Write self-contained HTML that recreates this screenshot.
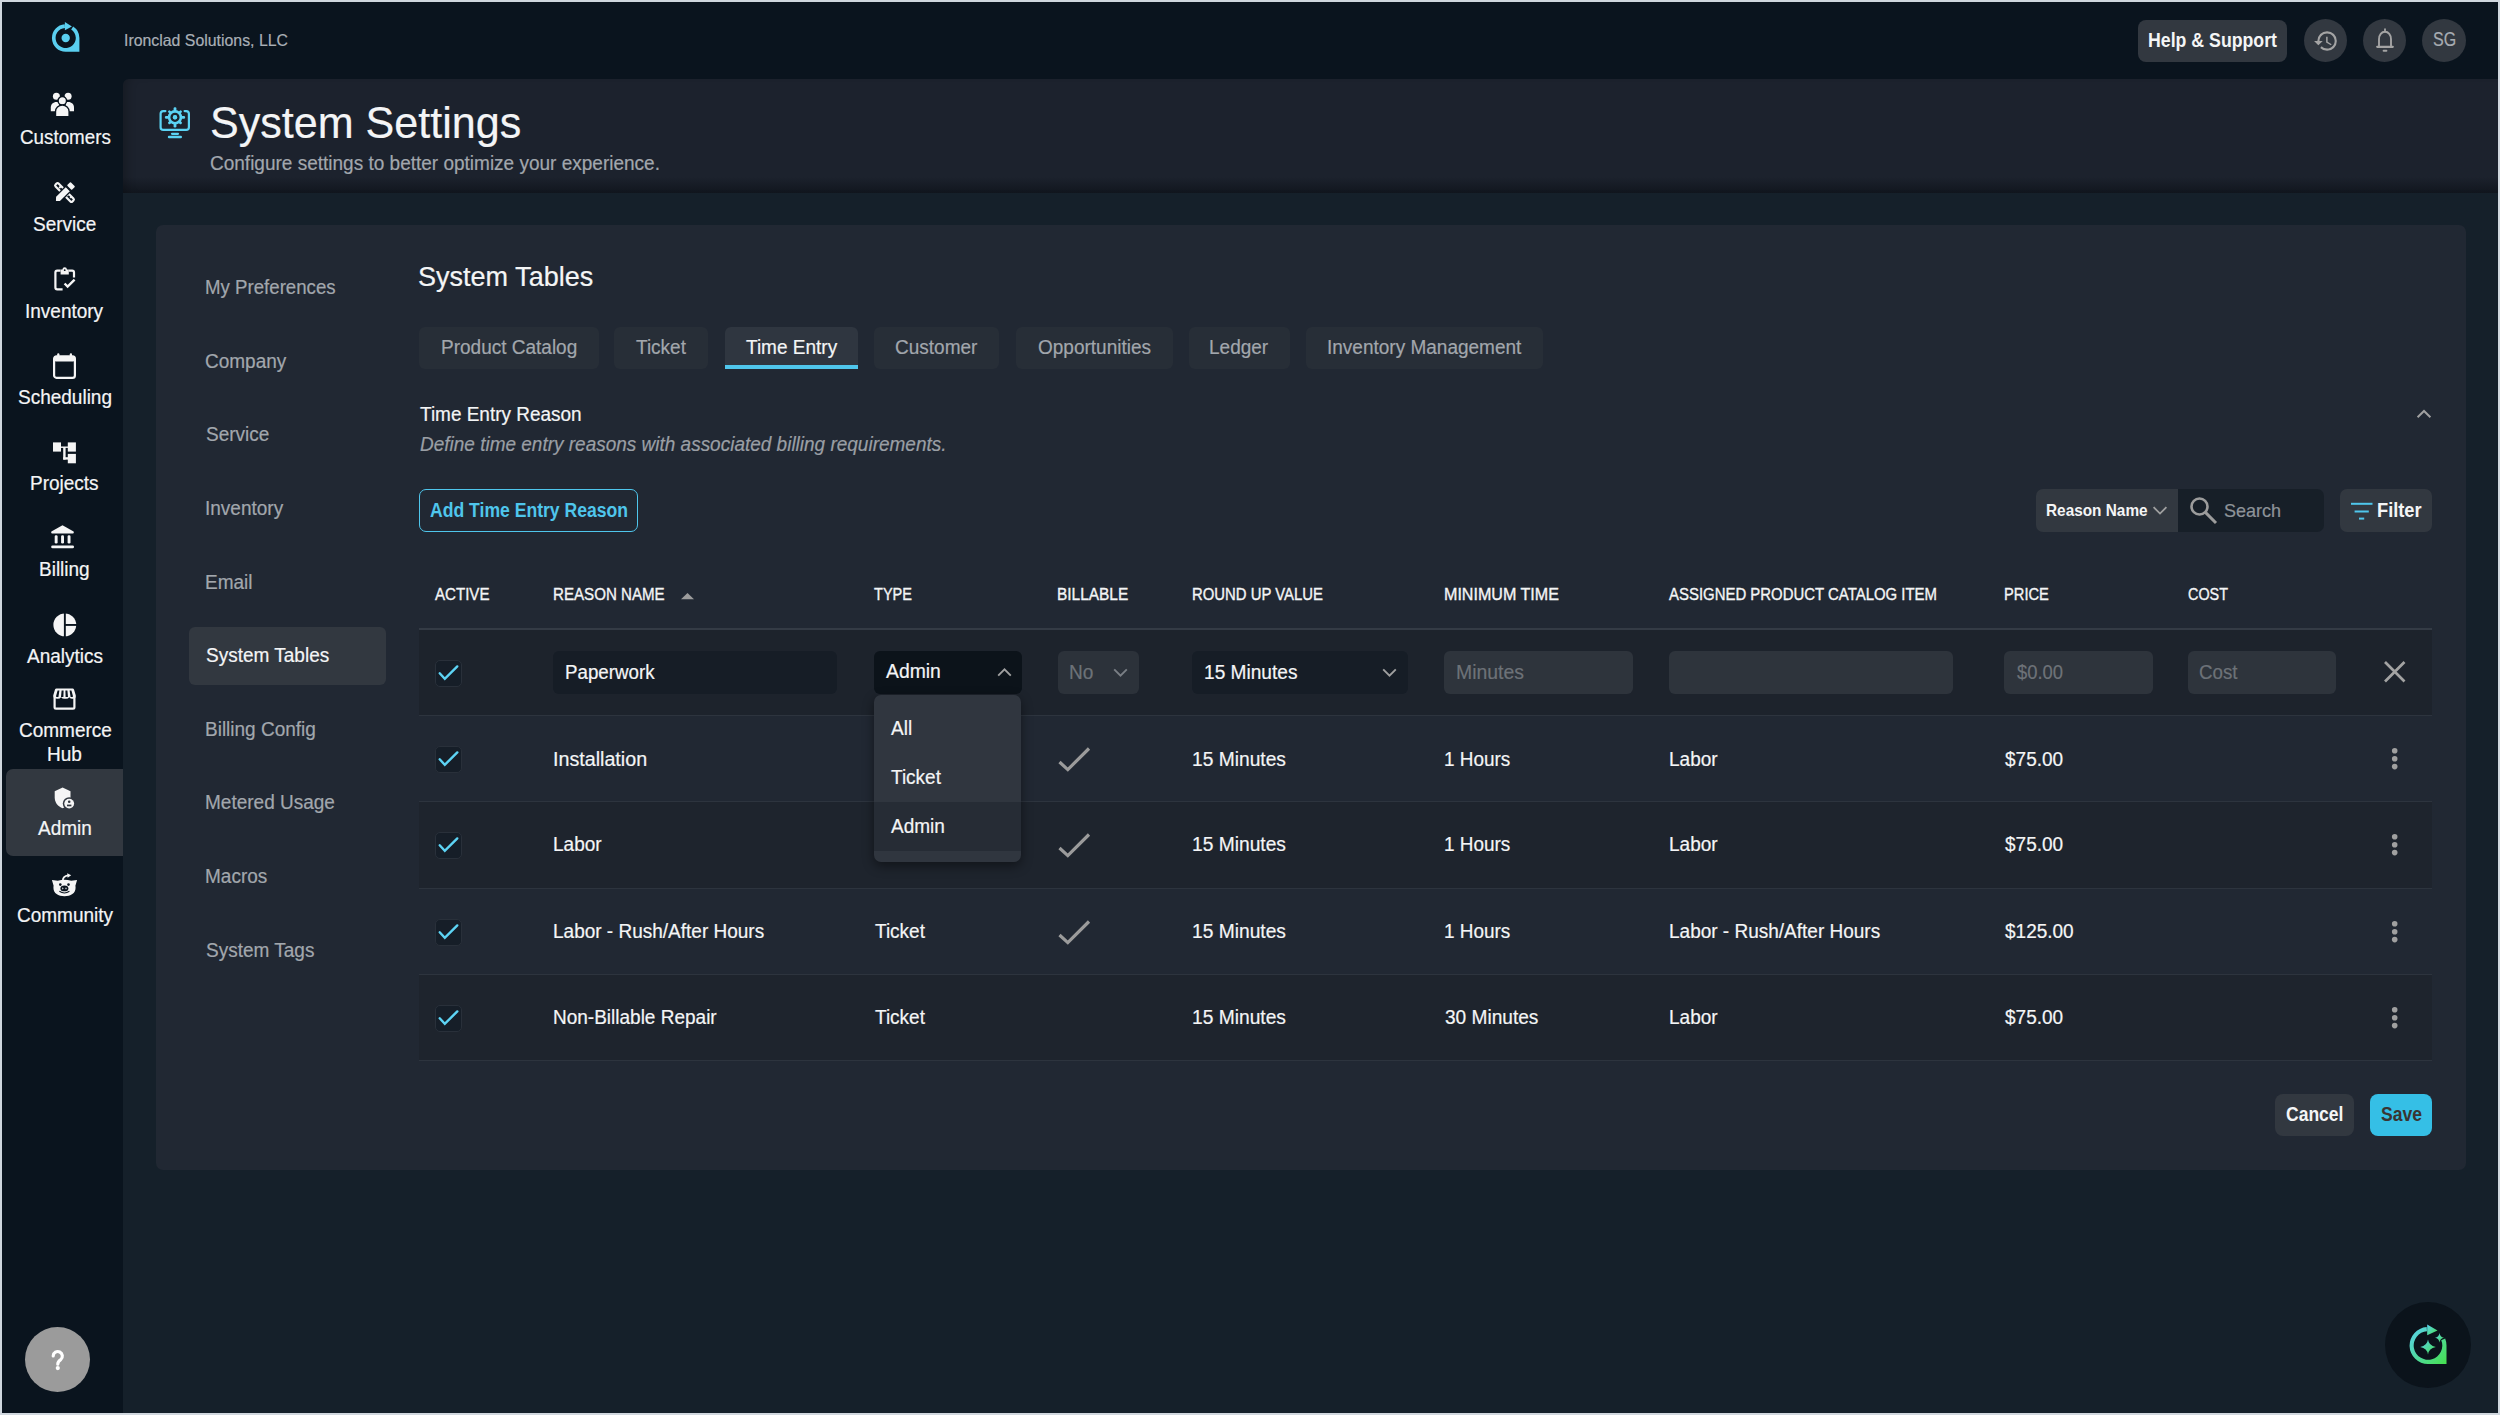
<!DOCTYPE html>
<html><head><meta charset="utf-8"><title>System Settings</title><style>
html,body{margin:0;padding:0}
body{width:2500px;height:1415px;background:#d0d7de;position:relative;overflow:hidden;font-family:"Liberation Sans",sans-serif}
.a{position:absolute}
.t{position:absolute;white-space:pre;line-height:1;transform-origin:0 0;font-family:"Liberation Sans",sans-serif}
.tab{top:327px;height:42px;background:#272e37;border-radius:6px}
.line{left:419px;width:2013px;height:1px;background:#2d343e}
.cb{left:435px;width:26.5px;height:26.5px;box-sizing:border-box;background:#161e28;border:1px solid #29303a;border-radius:5px}
.inp{top:651px;height:43px;border-radius:6px}
</style></head>
<body>
<!-- frame -->
<div class="a" style="left:2px;top:2px;width:2496px;height:1411px;background:#0a141e"></div>
<!-- header panel -->
<div class="a" style="left:123px;top:79px;width:2375px;height:114px;background:linear-gradient(#1c222d 0,#1c222d 98px,#11161e 114px);border-top-left-radius:6px;box-shadow:inset 10px 0 10px -6px rgba(0,0,0,0.22)"></div>
<!-- main bg -->
<div class="a" style="left:123px;top:193px;width:2375px;height:1220px;background:#15202a"></div>
<!-- settings panel -->
<div class="a" style="left:156px;top:225px;width:2310px;height:945px;background:#212833;border-radius:7px"></div>
<!-- selected nav -->
<div class="a" style="left:189px;top:627px;width:197px;height:58px;background:#323840;border-radius:6px"></div>
<!-- sidebar selected admin -->
<div class="a" style="left:6px;top:769px;width:117px;height:87px;background:#323840;border-radius:7px 0 0 7px"></div>

<!-- top bar buttons -->
<div class="a" style="left:2138px;top:20px;width:149px;height:42px;background:#323840;border-radius:8px"></div>
<div class="a" style="left:2304px;top:19px;width:43px;height:43px;background:#323840;border-radius:50%"></div>
<div class="a" style="left:2363px;top:19px;width:43px;height:43px;background:#323840;border-radius:50%"></div>
<div class="a" style="left:2422px;top:19px;width:44px;height:43px;background:#323840;border-radius:50%"></div>
<svg class="a" style="left:2312.5px;top:27.5px" width="26" height="26" viewBox="0 0 24 24"><path fill="#a4a4a4" d="M13 3a9 9 0 0 0-9 9H1l3.89 3.89.07.14L9 12H6c0-3.87 3.13-7 7-7s7 3.13 7 7-3.13 7-7 7c-1.93 0-3.68-.79-4.94-2.06l-1.42 1.42A8.954 8.954 0 0 0 13 21a9 9 0 0 0 0-18zm-.9 5v5.4l4.4 2.6.7-1.1-3.7-2.2V8z"/></svg>
<svg class="a" style="left:2376px;top:28px" width="18" height="25" viewBox="0 0 18 25" fill="none" stroke="#a4a4a4" stroke-linecap="round"><path d="M9 1.2V3.6" stroke-width="1.8"/><path d="M3 18V11.2C3 6.8 5.6 3.8 9 3.8S15 6.8 15 11.2V18" stroke-width="1.9"/><path d="M1.2 18.8H16.8" stroke-width="2.2"/><path d="M7.6 22.8H10.4" stroke-width="2"/></svg>

<!-- logo -->
<svg class="a" style="left:51px;top:22px" width="30" height="31" viewBox="0 0 30 31"><path fill="#5acff0" d="M22.16 4.51A13.7 13.7 0 0 1 28.40 16.00L28.40 29.70L14.70 29.70A13.7 13.7 0 0 1 13.74 2.33L14.00 5.92A10.1 10.1 0 1 0 20.20 7.53Z"/><circle cx="14.7" cy="16" r="4.2" fill="#5acff0"/><path fill="#5acff0" d="M13.9 0L20.9 4.5L13.9 8.2Z"/></svg>

<!-- sidebar icons -->
<svg class="a" style="left:50px;top:92px" width="25" height="25" viewBox="0 0 25 25" fill="#f5f5f5">
 <path d="M0.8 19.2V15.6C0.8 12.4 3.2 10.1 6.4 10.1H9V19.2Z"/><path d="M24 19.2V15.6C24 12.4 21.6 10.1 18.4 10.1H15.8V19.2Z"/>
 <circle cx="6.4" cy="4.3" r="3.5"/><circle cx="18.1" cy="4.3" r="3.5"/>
 <circle cx="12.3" cy="8.7" r="4.2" stroke="#0a141e" stroke-width="1.4"/>
 <path d="M5.5 24.6V19.6C5.5 15.9 8.5 13.1 12.3 13.1S19.1 15.9 19.1 19.6V24.6Z" stroke="#0a141e" stroke-width="1.4"/>
</svg>
<svg class="a" style="left:53px;top:181px" width="23" height="23" viewBox="0 0 23 23">
 <g transform="rotate(45 11.5 11.5)"><rect x="-0.4" y="9.4" width="23.8" height="4.2" rx="1.4" fill="#0a141e" stroke="#f5f5f5" stroke-width="2.2"/><rect x="3.6" y="9.4" width="1.9" height="2.7" fill="#f5f5f5"/><rect x="7.4" y="9.4" width="1.9" height="1.8" fill="#f5f5f5"/><rect x="14.6" y="9.4" width="1.9" height="2.7" fill="#f5f5f5"/><rect x="18.4" y="9.4" width="1.9" height="1.8" fill="#f5f5f5"/></g>
 <g transform="rotate(-45 11.5 11.5)"><path d="M-1.6 11.5L2.2 8H16.8V15H2.2Z" fill="#f5f5f5" stroke="#0a141e" stroke-width="1.3"/><rect x="18.3" y="8.2" width="4.9" height="6.6" rx="0.8" fill="#f5f5f5"/></g>
</svg>
<svg class="a" style="left:54px;top:266.5px" width="23" height="24" viewBox="0 0 23 24" fill="none" stroke="#f5f5f5">
 <path d="M6.5 3.6H3.2Q1.4 3.6 1.4 5.4V20.6Q1.4 22.4 3.2 22.4H8.6" stroke-width="2.2"/><path d="M14.8 3.6H18.2Q20 3.6 20 5.4V10.5" stroke-width="2.2"/>
 <path d="M6.6 2.5H8.4Q8.6 0.3 10.7 0.3T13 2.5H14.8V7.4H6.6Z" fill="#f5f5f5" stroke="none"/><circle cx="10.7" cy="3.2" r="0.9" fill="#0a141e" stroke="none"/>
 <path d="M10.6 16.5L13.6 19.6L20.6 12.6" stroke-width="2.4"/>
</svg>
<svg class="a" style="left:53px;top:352.5px" width="23" height="26" viewBox="0 0 23 26">
 <rect x="1.1" y="3.4" width="20.8" height="21.4" rx="2.4" fill="none" stroke="#f5f5f5" stroke-width="2.2"/><rect x="1" y="3" width="21" height="5.5" rx="2" fill="#f5f5f5"/>
 <rect x="4.2" y="0.3" width="2.2" height="4" rx="1" fill="#f5f5f5"/><rect x="16.8" y="0.3" width="2.2" height="4" rx="1" fill="#f5f5f5"/>
</svg>
<svg class="a" style="left:53px;top:441.5px" width="24" height="22" viewBox="0 0 24 22" fill="#f5f5f5">
 <rect x="0" y="0.4" width="8" height="9.2"/><rect x="14.8" y="0.4" width="8.1" height="9.2"/><rect x="14.8" y="11.9" width="8.1" height="9.4"/>
 <rect x="8" y="4.5" width="7" height="1.4"/><rect x="10.2" y="5" width="2.4" height="12.6"/><rect x="10.2" y="15.2" width="5" height="2.4"/>
</svg>
<svg class="a" style="left:51px;top:524.5px" width="24" height="24" viewBox="0 0 24 24" fill="#f5f5f5">
 <path d="M11.5 0.3L22.6 6.6Q23.3 8.4 21.8 8.4H1.2Q-0.3 8.4 0.4 6.6Z"/>
 <rect x="3.7" y="10.2" width="2.9" height="8.3" rx="1.3"/><rect x="10.1" y="10.2" width="2.9" height="8.3" rx="1.3"/><rect x="16.6" y="10.2" width="2.9" height="8.3" rx="1.3"/>
 <rect x="0.2" y="20.4" width="22.8" height="2.9" rx="1.4"/>
</svg>
<svg class="a" style="left:52.5px;top:612.5px" width="24" height="24" viewBox="0 0 24 24">
 <circle cx="11.8" cy="11.9" r="11.4" fill="#f5f5f5"/><rect x="10.9" y="0" width="1.9" height="24" fill="#0a141e"/><rect x="11" y="11" width="13" height="1.9" fill="#0a141e"/>
</svg>
<svg class="a" style="left:53px;top:687.5px" width="23" height="22" viewBox="0 0 23 22">
 <path d="M1.6 8.6V19.2Q1.6 20.6 3 20.6H20Q21.4 20.6 21.4 19.2V8.6" fill="none" stroke="#f5f5f5" stroke-width="2.2"/>
 <path d="M3.4 0.6H19.6Q20.6 0.6 21 1.6L22.8 7.6Q23 10.8 19.6 10.8Q17.3 10.8 16.3 9.2Q15.2 10.8 12.9 10.8Q11.5 10.8 11.5 10.8Q9.2 10.8 8.1 9.2Q7 10.8 4.6 10.8Q0 10.8 0.2 7.6L2 1.6Q2.4 0.6 3.4 0.6Z" fill="#f5f5f5"/>
 <path d="M4.6 2.6L3 8.2Q3 9 3.8 9L5.4 9L6.4 2.6Z M8.6 2.6L8 9H10.4L10.6 2.6Z M12.4 2.6L12.6 9H15L14.4 2.6Z M16.6 2.6L17.6 9L19.2 9Q20 9 20 8.2L18.4 2.6Z" fill="#0a141e"/>
</svg>
<svg class="a" style="left:54px;top:786.5px" width="23" height="23" viewBox="0 0 23 23">
 <path d="M8.6 0.6L16.5 4.2V10.2C16.5 15.6 13.2 19.6 8.6 21.2C4 19.6 0.7 15.6 0.7 10.2V4.2Z" fill="#f5f5f5"/>
 <circle cx="15.2" cy="16.6" r="6.4" fill="#323840"/><circle cx="15.2" cy="16.6" r="4.9" fill="#f5f5f5"/>
 <circle cx="15.2" cy="14.7" r="1.3" fill="#323840"/><rect x="13" y="17.6" width="4.4" height="1.7" fill="#323840"/>
</svg>
<svg class="a" style="left:52px;top:873px" width="25" height="24" viewBox="0 0 25 24">
 <path d="M10.8 7.8C10.8 4.6 12.8 2.8 16.2 2.4" fill="none" stroke="#f5f5f5" stroke-width="1.7"/><path d="M15.2 0.2L19.2 2.2L15.6 4.8Z" fill="#f5f5f5"/>
 <path d="M-0.1 7L5.8 7.8Q12.5 5.6 19.2 7.8L25.1 7L23.4 12.8C24.6 19.6 19.4 23.2 12.5 23.2C5.6 23.2 0.4 19.6 1.6 12.8Z" fill="#f5f5f5"/>
 <circle cx="8.3" cy="11.6" r="1.3" fill="#0a141e"/><circle cx="16.5" cy="11.6" r="1.3" fill="#0a141e"/>
 <ellipse cx="12.4" cy="15.4" rx="4" ry="2.9" fill="#0a141e"/><path d="M10.8 14.2L11.5 15.4L10.8 16.6L10.1 15.4Z M14 14.2L14.7 15.4L14 16.6L13.3 15.4Z" fill="#f5f5f5"/>
 <path d="M7.4 18.3Q12.4 21.6 17.4 18.3" fill="none" stroke="#0a141e" stroke-width="1.1"/>
</svg>

<!-- header icon -->
<svg class="a" style="left:159px;top:107px" width="32" height="32" viewBox="0 0 32 32" fill="none" stroke="#5bd3f4">
 <path d="M6.4 4.1H4.2Q1.6 4.1 1.6 6.8V20.2Q1.6 22.9 4.2 22.9H27.2Q29.9 22.9 29.9 20.2V6.8Q29.9 4.1 27.2 4.1H25.6" stroke-width="2.2" stroke-linecap="round"/>
 <path d="M13 26.8H19" stroke-width="2.2" stroke-linecap="round"/><path d="M10 30H21.8" stroke-width="2.4" stroke-linecap="round"/>
 <g fill="#5bd3f4" stroke="none"><circle cx="16" cy="10.3" r="7.2"/>
 <rect x="14.6" y="0.2" width="2.8" height="20.2" rx="1.2"/><rect x="5.9" y="8.9" width="20.2" height="2.8" rx="1.2"/>
 <rect x="14.7" y="1.1" width="2.6" height="18.4" rx="1.2" transform="rotate(45 16 10.3)"/><rect x="14.7" y="1.1" width="2.6" height="18.4" rx="1.2" transform="rotate(-45 16 10.3)"/></g>
 <circle cx="16" cy="10.3" r="3.4" stroke="#1c222b" stroke-width="2.4"/><circle cx="16" cy="10.3" r="2.1" fill="#5bd3f4" stroke="none"/>
</svg>

<!-- tabs -->
<div class="a tab" style="left:419px;width:179.7px"></div>
<div class="a tab" style="left:614px;width:94px"></div>
<div class="a tab" style="left:725px;width:133px;background:#2f3640;border-radius:6px 6px 0 0"></div>
<div class="a" style="left:725px;top:365px;width:133px;height:4px;background:#4fc6ec"></div>
<div class="a tab" style="left:874px;width:125px"></div>
<div class="a tab" style="left:1016px;width:157px"></div>
<div class="a tab" style="left:1189px;width:101px"></div>
<div class="a tab" style="left:1306px;width:237px"></div>

<!-- collapse chevron -->
<svg class="a" style="left:2414px;top:406px" width="20" height="14" viewBox="0 0 20 14" fill="none" stroke="#a0a0a0" stroke-width="2"><path d="M3.6 11.2L10 5L16.4 11.2"/></svg>

<!-- add button -->
<div class="a" style="left:419px;top:489px;width:219px;height:43px;box-sizing:border-box;border:1.6px solid #4fc6ec;border-radius:7px;background:transparent"></div>

<!-- reason name / search / filter -->
<div class="a" style="left:2036px;top:489px;width:142px;height:43px;background:#323840;border-radius:7px 0 0 7px"></div>
<div class="a" style="left:2178px;top:489px;width:146px;height:43px;background:#171f28;border-radius:0 7px 7px 0"></div>
<div class="a" style="left:2340px;top:489px;width:92px;height:43px;background:#323840;border-radius:7px"></div>
<svg class="a" style="left:2150px;top:503px" width="20" height="14" viewBox="0 0 20 14" fill="none" stroke="#a0a0a0" stroke-width="1.8"><path d="M3.6 4.2L10 10.6L16.4 4.2"/></svg>
<svg class="a" style="left:2188px;top:495px" width="32" height="32" viewBox="0 0 32 32" fill="none" stroke="#9c9c9c"><circle cx="11.5" cy="11.5" r="8" stroke-width="2.6"/><path d="M17.4 17.4L28 28" stroke-width="3"/></svg>
<svg class="a" style="left:2350px;top:501px" width="24" height="20" viewBox="0 0 24 20" fill="#4fc6ec"><rect x="1" y="1.8" width="21.5" height="2"/><rect x="4.6" y="9.5" width="14.2" height="2"/><rect x="9" y="16.6" width="5.2" height="2"/></svg>

<!-- table -->
<div class="a" style="left:419px;top:630px;width:2013px;height:85px;background:#1d232c"></div>
<div class="a" style="left:419px;top:802px;width:2013px;height:86px;background:#1e242d"></div>
<div class="a" style="left:419px;top:975px;width:2013px;height:85px;background:#1e242d"></div>
<div class="a" style="left:419px;top:628px;width:2013px;height:2px;background:#343b45"></div>
<div class="a line" style="top:715px"></div>
<div class="a line" style="top:801px"></div>
<div class="a line" style="top:888px"></div>
<div class="a line" style="top:974px"></div>
<div class="a line" style="top:1060px"></div>
<svg class="a" style="left:680px;top:592px" width="16" height="8" viewBox="0 0 16 8"><path d="M1 7.2L7.5 1L14 7.2Z" fill="#9c9c9c"/></svg>

<!-- checkboxes -->
<div class="a cb" style="top:660px"></div>
<div class="a cb" style="top:746px"></div>
<div class="a cb" style="top:832px"></div>
<div class="a cb" style="top:919px"></div>
<div class="a cb" style="top:1005px"></div>

<svg class="a" style="left:435px;top:660px;z-index:2" width="27" height="27" viewBox="0 0 27 27" fill="none" stroke="#5dd4f5" stroke-width="2.4" stroke-linecap="round"><path d="M4.7 13.3L9.8 18.8L22.3 6.4"/></svg><svg class="a" style="left:435px;top:746px;z-index:2" width="27" height="27" viewBox="0 0 27 27" fill="none" stroke="#5dd4f5" stroke-width="2.4" stroke-linecap="round"><path d="M4.7 13.3L9.8 18.8L22.3 6.4"/></svg><svg class="a" style="left:435px;top:832px;z-index:2" width="27" height="27" viewBox="0 0 27 27" fill="none" stroke="#5dd4f5" stroke-width="2.4" stroke-linecap="round"><path d="M4.7 13.3L9.8 18.8L22.3 6.4"/></svg><svg class="a" style="left:435px;top:919px;z-index:2" width="27" height="27" viewBox="0 0 27 27" fill="none" stroke="#5dd4f5" stroke-width="2.4" stroke-linecap="round"><path d="M4.7 13.3L9.8 18.8L22.3 6.4"/></svg><svg class="a" style="left:435px;top:1005px;z-index:2" width="27" height="27" viewBox="0 0 27 27" fill="none" stroke="#5dd4f5" stroke-width="2.4" stroke-linecap="round"><path d="M4.7 13.3L9.8 18.8L22.3 6.4"/></svg>
<!-- edit row inputs -->
<div class="a inp" style="left:553px;width:284px;background:#161d26"></div>
<div class="a inp" style="left:874px;width:148px;background:#0c131a"></div>
<div class="a inp" style="left:1058px;width:81px;background:#2c323a"></div>
<div class="a inp" style="left:1192px;width:216px;background:#161d26"></div>
<div class="a inp" style="left:1444px;width:189px;background:#2e343c"></div>
<div class="a inp" style="left:1669px;width:284px;background:#2e343c"></div>
<div class="a inp" style="left:2004px;width:149px;background:#2e343c"></div>
<div class="a inp" style="left:2188px;width:148px;background:#2e343c"></div>
<svg class="a" style="left:994px;top:662px" width="20" height="20" viewBox="0 0 20 20" fill="none" stroke="#a0a0a0" stroke-width="1.9"><path d="M4.2 13.6L10.5 7.4L16.8 13.6"/></svg>
<svg class="a" style="left:1110px;top:662px" width="20" height="20" viewBox="0 0 20 20" fill="none" stroke="#7a7f85" stroke-width="1.9"><path d="M4.2 7.4L10.5 13.6L16.8 7.4"/></svg>
<svg class="a" style="left:1379px;top:662px" width="20" height="20" viewBox="0 0 20 20" fill="none" stroke="#a0a0a0" stroke-width="1.9"><path d="M4.2 7.4L10.5 13.6L16.8 7.4"/></svg>
<svg class="a" style="left:2380px;top:657px" width="30" height="30" viewBox="0 0 30 30" fill="none" stroke="#a3a3a3" stroke-width="2.7"><path d="M5 5L24.5 24.5M24.5 5L5 24.5"/></svg>

<!-- billable checks -->
<svg class="a" style="left:1055px;top:744px" width="40" height="30" viewBox="0 0 40 30" fill="none" stroke="#9b9b9b" stroke-width="3.2"><path d="M4.5 18L12.8 25.6L34 4.5"/></svg>
<svg class="a" style="left:1055px;top:830px" width="40" height="30" viewBox="0 0 40 30" fill="none" stroke="#9b9b9b" stroke-width="3.2"><path d="M4.5 18L12.8 25.6L34 4.5"/></svg>
<svg class="a" style="left:1055px;top:917px" width="40" height="30" viewBox="0 0 40 30" fill="none" stroke="#9b9b9b" stroke-width="3.2"><path d="M4.5 18L12.8 25.6L34 4.5"/></svg>

<!-- kebabs -->
<svg class="a" style="left:2389px;top:745px" width="12" height="27" viewBox="0 0 12 27" fill="#a0a0a0"><circle cx="5.7" cy="5.7" r="2.8"/><circle cx="5.7" cy="13.7" r="2.8"/><circle cx="5.7" cy="21.6" r="2.8"/></svg>
<svg class="a" style="left:2389px;top:831px" width="12" height="27" viewBox="0 0 12 27" fill="#a0a0a0"><circle cx="5.7" cy="5.7" r="2.8"/><circle cx="5.7" cy="13.7" r="2.8"/><circle cx="5.7" cy="21.6" r="2.8"/></svg>
<svg class="a" style="left:2389px;top:918px" width="12" height="27" viewBox="0 0 12 27" fill="#a0a0a0"><circle cx="5.7" cy="5.7" r="2.8"/><circle cx="5.7" cy="13.7" r="2.8"/><circle cx="5.7" cy="21.6" r="2.8"/></svg>
<svg class="a" style="left:2389px;top:1004px" width="12" height="27" viewBox="0 0 12 27" fill="#a0a0a0"><circle cx="5.7" cy="5.7" r="2.8"/><circle cx="5.7" cy="13.7" r="2.8"/><circle cx="5.7" cy="21.6" r="2.8"/></svg>

<!-- dropdown -->
<div class="a" style="left:874px;top:694.5px;width:147px;height:167.5px;background:#30363f;border-radius:7px;box-shadow:0 4px 12px rgba(0,0,0,0.45);z-index:30;overflow:hidden"><div style="position:absolute;left:0;top:107px;width:147px;height:49px;background:#262c35"></div></div>

<!-- buttons -->
<div class="a" style="left:2275px;top:1094px;width:79px;height:42px;background:#323840;border-radius:8px"></div>
<div class="a" style="left:2370px;top:1094px;width:62px;height:42px;background:#35bfe6;border-radius:8px"></div>

<!-- help & fab -->
<div class="a" style="left:25px;top:1327px;width:65px;height:65px;background:#9b9b9b;border-radius:50%"></div>
<svg class="a" style="left:25px;top:1327px" width="65" height="65" viewBox="0 0 65 65"><g transform="translate(32.6 34.6) scale(0.88) translate(-32.6 -34.6)"><path d="M27.6 28.2A5.2 5.2 0 1 1 36.2 32.3Q32.8 34.4 32.8 37.6" fill="none" stroke="#fff" stroke-width="3.6" stroke-linecap="round"/><circle cx="32.8" cy="42" r="2.4" fill="#fff"/></g></svg>
<div class="a" style="left:2385px;top:1302px;width:86px;height:86px;background:#0b131b;border-radius:50%"></div>
<svg class="a" style="left:2409px;top:1323px" width="40" height="44" viewBox="0 0 40 44">
 <defs><linearGradient id="fg" x1="0" y1="0" x2="1" y2="1"><stop offset="0" stop-color="#5ad2f2"/><stop offset="1" stop-color="#46e04e"/></linearGradient></defs>
 <path fill="url(#fg)" d="M36.15 15.57A18.5 18.5 0 0 1 37.50 22.50L37.50 41.00L19.00 41.00A18.5 18.5 0 0 1 17.71 4.05L18.00 8.23A14.3 14.3 0 1 0 32.26 17.14Z"/>
 <path fill="url(#fg)" d="M18.2 1.5L28.5 7.5L18.2 12.2Z"/>
 <path fill="url(#fg)" d="M19 16.5Q19.8 22.7 26.8 24Q19.8 25.3 19 31.5Q18.2 25.3 11.2 24Q18.2 22.7 19 16.5Z"/>
 <path fill="url(#fg)" d="M30.5 10Q31 14.2 35 14.8Q31 15.4 30.5 19.6Q30 15.4 26 14.8Q30 14.2 30.5 10Z"/>
</svg>

<span class="t" style="top:32.06px;font-size:16.5px;color:#a9afb6;z-index:5;transform:scaleX(0.9612);-webkit-text-stroke:0.2px #a9afb6;left:123.54px;">Ironclad Solutions, LLC</span>
<span class="t" style="top:30.10px;font-size:20px;color:#f4f5f6;z-index:5;transform:scaleX(0.8862);font-weight:700;left:2147.71px;">Help &amp; Support</span>
<span class="t" style="top:29.10px;font-size:20px;color:#a7acb2;z-index:5;transform:scaleX(0.8010);-webkit-text-stroke:0.2px #a7acb2;left:2432.70px;">SG</span>
<span class="t" style="top:128.19px;font-size:19.3px;color:#f4f5f6;z-index:5;transform:scaleX(0.9744);-webkit-text-stroke:0.2px #f4f5f6;left:19.80px;">Customers</span>
<span class="t" style="top:215.29px;font-size:19.3px;color:#f4f5f6;z-index:5;transform:scaleX(0.9850);-webkit-text-stroke:0.2px #f4f5f6;left:33.39px;">Service</span>
<span class="t" style="top:301.69px;font-size:19.3px;color:#f4f5f6;z-index:5;transform:scaleX(0.9850);-webkit-text-stroke:0.2px #f4f5f6;left:24.97px;">Inventory</span>
<span class="t" style="top:387.99px;font-size:19.3px;color:#f4f5f6;z-index:5;transform:scaleX(0.9850);-webkit-text-stroke:0.2px #f4f5f6;left:18.07px;">Scheduling</span>
<span class="t" style="top:473.89px;font-size:19.3px;color:#f4f5f6;z-index:5;transform:scaleX(0.9850);-webkit-text-stroke:0.2px #f4f5f6;left:30.22px;">Projects</span>
<span class="t" style="top:559.69px;font-size:19.3px;color:#f4f5f6;z-index:5;transform:scaleX(0.9850);-webkit-text-stroke:0.2px #f4f5f6;left:39.23px;">Billing</span>
<span class="t" style="top:646.99px;font-size:19.3px;color:#f4f5f6;z-index:5;transform:scaleX(0.9850);-webkit-text-stroke:0.2px #f4f5f6;left:27.02px;">Analytics</span>
<span class="t" style="top:721.29px;font-size:19.3px;color:#f4f5f6;z-index:5;transform:scaleX(0.9850);-webkit-text-stroke:0.2px #f4f5f6;left:18.62px;">Commerce</span>
<span class="t" style="top:745.49px;font-size:19.3px;color:#f4f5f6;z-index:5;transform:scaleX(0.9850);-webkit-text-stroke:0.2px #f4f5f6;left:47.14px;">Hub</span>
<span class="t" style="top:819.29px;font-size:19.3px;color:#f4f5f6;z-index:5;transform:scaleX(0.9850);-webkit-text-stroke:0.2px #f4f5f6;left:38.14px;">Admin</span>
<span class="t" style="top:906.09px;font-size:19.3px;color:#f4f5f6;z-index:5;transform:scaleX(0.9850);-webkit-text-stroke:0.2px #f4f5f6;left:16.51px;">Community</span>
<span class="t" style="top:101.54px;font-size:43.5px;color:#f4f5f6;z-index:5;transform:scaleX(0.9903);-webkit-text-stroke:0.2px #f4f5f6;left:209.91px;">System Settings</span>
<span class="t" style="top:153.10px;font-size:20px;color:#a2a7ad;z-index:5;transform:scaleX(0.9501);-webkit-text-stroke:0.2px #a2a7ad;left:209.55px;">Configure settings to better optimize your experience.</span>
<span class="t" style="top:277.20px;font-size:20px;color:#a2a7ad;z-index:5;transform:scaleX(0.9328);-webkit-text-stroke:0.2px #a2a7ad;left:205.37px;">My Preferences</span>
<span class="t" style="top:350.80px;font-size:20px;color:#a2a7ad;z-index:5;transform:scaleX(0.9500);-webkit-text-stroke:0.2px #a2a7ad;left:205.35px;">Company</span>
<span class="t" style="top:424.40px;font-size:20px;color:#a2a7ad;z-index:5;transform:scaleX(0.9500);-webkit-text-stroke:0.2px #a2a7ad;left:206.30px;">Service</span>
<span class="t" style="top:498.00px;font-size:20px;color:#a2a7ad;z-index:5;transform:scaleX(0.9500);-webkit-text-stroke:0.2px #a2a7ad;left:205.35px;">Inventory</span>
<span class="t" style="top:571.60px;font-size:20px;color:#a2a7ad;z-index:5;transform:scaleX(0.9500);-webkit-text-stroke:0.2px #a2a7ad;left:205.35px;">Email</span>
<span class="t" style="top:645.20px;font-size:20px;color:#f4f5f6;z-index:5;transform:scaleX(0.9500);-webkit-text-stroke:0.2px #f4f5f6;left:206.30px;">System Tables</span>
<span class="t" style="top:718.80px;font-size:20px;color:#a2a7ad;z-index:5;transform:scaleX(0.9500);-webkit-text-stroke:0.2px #a2a7ad;left:205.35px;">Billing Config</span>
<span class="t" style="top:792.40px;font-size:20px;color:#a2a7ad;z-index:5;transform:scaleX(0.9500);-webkit-text-stroke:0.2px #a2a7ad;left:205.35px;">Metered Usage</span>
<span class="t" style="top:866.00px;font-size:20px;color:#a2a7ad;z-index:5;transform:scaleX(0.9500);-webkit-text-stroke:0.2px #a2a7ad;left:205.35px;">Macros</span>
<span class="t" style="top:939.60px;font-size:20px;color:#a2a7ad;z-index:5;transform:scaleX(0.9500);-webkit-text-stroke:0.2px #a2a7ad;left:206.30px;">System Tags</span>
<span class="t" style="top:262.96px;font-size:27.5px;color:#f4f5f6;z-index:5;transform:scaleX(0.9827);-webkit-text-stroke:0.2px #f4f5f6;left:418.22px;">System Tables</span>
<span class="t" style="top:337.10px;font-size:20px;color:#a2a7ad;z-index:5;transform:scaleX(0.9500);-webkit-text-stroke:0.2px #a2a7ad;left:440.78px;">Product Catalog</span>
<span class="t" style="top:337.10px;font-size:20px;color:#a2a7ad;z-index:5;transform:scaleX(0.9500);-webkit-text-stroke:0.2px #a2a7ad;left:635.81px;">Ticket</span>
<span class="t" style="top:337.10px;font-size:20px;color:#f4f5f6;z-index:5;transform:scaleX(0.9500);-webkit-text-stroke:0.2px #f4f5f6;left:745.93px;">Time Entry</span>
<span class="t" style="top:337.10px;font-size:20px;color:#a2a7ad;z-index:5;transform:scaleX(0.9500);-webkit-text-stroke:0.2px #a2a7ad;left:894.69px;">Customer</span>
<span class="t" style="top:337.10px;font-size:20px;color:#a2a7ad;z-index:5;transform:scaleX(0.9500);-webkit-text-stroke:0.2px #a2a7ad;left:1038.00px;">Opportunities</span>
<span class="t" style="top:337.10px;font-size:20px;color:#a2a7ad;z-index:5;transform:scaleX(0.9500);-webkit-text-stroke:0.2px #a2a7ad;left:1209.28px;">Ledger</span>
<span class="t" style="top:337.10px;font-size:20px;color:#a2a7ad;z-index:5;transform:scaleX(0.9500);-webkit-text-stroke:0.2px #a2a7ad;left:1326.65px;">Inventory Management</span>
<span class="t" style="top:403.50px;font-size:20px;color:#f4f5f6;z-index:5;transform:scaleX(0.9480);-webkit-text-stroke:0.2px #f4f5f6;left:419.50px;">Time Entry Reason</span>
<span class="t" style="top:433.90px;font-size:20px;color:#9a9fa5;z-index:5;transform:scaleX(0.9491);-webkit-text-stroke:0.2px #9a9fa5;font-style:italic;left:420.00px;">Define time entry reasons with associated billing requirements.</span>
<span class="t" style="top:500.20px;font-size:20px;color:#4fc6ec;z-index:5;transform:scaleX(0.8794);font-weight:700;left:430.00px;">Add Time Entry Reason</span>
<span class="t" style="top:502.06px;font-size:16.5px;color:#f4f5f6;z-index:5;transform:scaleX(0.9310);font-weight:700;left:2046.07px;">Reason Name</span>
<span class="t" style="top:500.84px;font-size:19px;color:#8e9399;z-index:5;transform:scaleX(0.9491);-webkit-text-stroke:0.2px #8e9399;left:2223.70px;">Search</span>
<span class="t" style="top:500.40px;font-size:20px;color:#f4f5f6;z-index:5;transform:scaleX(0.9124);font-weight:700;left:2377.09px;">Filter</span>
<span class="t" style="top:587.20px;font-size:16.8px;color:#f4f5f6;z-index:5;transform:scaleX(0.8987);-webkit-text-stroke:0.35px #f4f5f6;left:435.00px;">ACTIVE</span>
<span class="t" style="top:587.20px;font-size:16.8px;color:#f4f5f6;z-index:5;transform:scaleX(0.9005);-webkit-text-stroke:0.35px #f4f5f6;left:553.00px;">REASON NAME</span>
<span class="t" style="top:587.20px;font-size:16.8px;color:#f4f5f6;z-index:5;transform:scaleX(0.8662);-webkit-text-stroke:0.35px #f4f5f6;left:874.40px;">TYPE</span>
<span class="t" style="top:587.20px;font-size:16.8px;color:#f4f5f6;z-index:5;transform:scaleX(0.9195);-webkit-text-stroke:0.35px #f4f5f6;left:1056.78px;">BILLABLE</span>
<span class="t" style="top:587.20px;font-size:16.8px;color:#f4f5f6;z-index:5;transform:scaleX(0.8872);-webkit-text-stroke:0.35px #f4f5f6;left:1191.51px;">ROUND UP VALUE</span>
<span class="t" style="top:587.20px;font-size:16.8px;color:#f4f5f6;z-index:5;transform:scaleX(0.9576);-webkit-text-stroke:0.35px #f4f5f6;left:1443.64px;">MINIMUM TIME</span>
<span class="t" style="top:587.20px;font-size:16.8px;color:#f4f5f6;z-index:5;transform:scaleX(0.8899);-webkit-text-stroke:0.35px #f4f5f6;left:1669.10px;">ASSIGNED PRODUCT CATALOG ITEM</span>
<span class="t" style="top:587.20px;font-size:16.8px;color:#f4f5f6;z-index:5;transform:scaleX(0.8744);-webkit-text-stroke:0.35px #f4f5f6;left:2003.63px;">PRICE</span>
<span class="t" style="top:587.20px;font-size:16.8px;color:#f4f5f6;z-index:5;transform:scaleX(0.8563);-webkit-text-stroke:0.35px #f4f5f6;left:2188.30px;">COST</span>
<span class="t" style="top:662.10px;font-size:20px;color:#f4f5f6;z-index:5;transform:scaleX(0.9362);-webkit-text-stroke:0.2px #f4f5f6;left:564.56px;">Paperwork</span>
<span class="t" style="top:661.30px;font-size:20px;color:#f4f5f6;z-index:5;transform:scaleX(0.9664);-webkit-text-stroke:0.2px #f4f5f6;left:886.30px;">Admin</span>
<span class="t" style="top:661.60px;font-size:20px;color:#6d7278;z-index:5;transform:scaleX(0.9532);-webkit-text-stroke:0.2px #6d7278;left:1069.05px;">No</span>
<span class="t" style="top:661.60px;font-size:20px;color:#f4f5f6;z-index:5;transform:scaleX(0.9553);-webkit-text-stroke:0.2px #f4f5f6;left:1203.54px;">15 Minutes</span>
<span class="t" style="top:661.60px;font-size:20px;color:#6d7278;z-index:5;transform:scaleX(0.9706);-webkit-text-stroke:0.2px #6d7278;left:1456.03px;">Minutes</span>
<span class="t" style="top:661.60px;font-size:20px;color:#6d7278;z-index:5;transform:scaleX(0.9214);-webkit-text-stroke:0.2px #6d7278;left:2017.00px;">$0.00</span>
<span class="t" style="top:661.60px;font-size:20px;color:#6d7278;z-index:5;transform:scaleX(0.9367);-webkit-text-stroke:0.2px #6d7278;left:2199.06px;">Cost</span>
<span class="t" style="top:748.50px;font-size:20px;color:#f4f5f6;z-index:5;transform:scaleX(0.9840);-webkit-text-stroke:0.2px #f4f5f6;left:553.02px;">Installation</span>
<span class="t" style="top:748.50px;font-size:20px;color:#f4f5f6;z-index:5;transform:scaleX(0.9604);-webkit-text-stroke:0.2px #f4f5f6;left:1192.04px;">15 Minutes</span>
<span class="t" style="top:748.50px;font-size:20px;color:#f4f5f6;z-index:5;transform:scaleX(0.9474);-webkit-text-stroke:0.2px #f4f5f6;left:1444.05px;">1 Hours</span>
<span class="t" style="top:748.50px;font-size:20px;color:#f4f5f6;z-index:5;transform:scaleX(0.9500);-webkit-text-stroke:0.2px #f4f5f6;left:1668.55px;">Labor</span>
<span class="t" style="top:748.50px;font-size:20px;color:#f4f5f6;z-index:5;transform:scaleX(0.9500);-webkit-text-stroke:0.2px #f4f5f6;left:2004.50px;">$75.00</span>
<span class="t" style="top:834.40px;font-size:20px;color:#f4f5f6;z-index:5;transform:scaleX(0.9500);-webkit-text-stroke:0.2px #f4f5f6;left:553.05px;">Labor</span>
<span class="t" style="top:834.40px;font-size:20px;color:#f4f5f6;z-index:5;transform:scaleX(0.9604);-webkit-text-stroke:0.2px #f4f5f6;left:1192.04px;">15 Minutes</span>
<span class="t" style="top:834.40px;font-size:20px;color:#f4f5f6;z-index:5;transform:scaleX(0.9474);-webkit-text-stroke:0.2px #f4f5f6;left:1444.05px;">1 Hours</span>
<span class="t" style="top:834.40px;font-size:20px;color:#f4f5f6;z-index:5;transform:scaleX(0.9500);-webkit-text-stroke:0.2px #f4f5f6;left:1668.55px;">Labor</span>
<span class="t" style="top:834.40px;font-size:20px;color:#f4f5f6;z-index:5;transform:scaleX(0.9500);-webkit-text-stroke:0.2px #f4f5f6;left:2004.50px;">$75.00</span>
<span class="t" style="top:921.40px;font-size:20px;color:#f4f5f6;z-index:5;transform:scaleX(0.9500);-webkit-text-stroke:0.2px #f4f5f6;left:553.05px;">Labor - Rush/After Hours</span>
<span class="t" style="top:921.40px;font-size:20px;color:#f4f5f6;z-index:5;transform:scaleX(0.9500);-webkit-text-stroke:0.2px #f4f5f6;left:874.50px;">Ticket</span>
<span class="t" style="top:921.40px;font-size:20px;color:#f4f5f6;z-index:5;transform:scaleX(0.9604);-webkit-text-stroke:0.2px #f4f5f6;left:1192.04px;">15 Minutes</span>
<span class="t" style="top:921.40px;font-size:20px;color:#f4f5f6;z-index:5;transform:scaleX(0.9474);-webkit-text-stroke:0.2px #f4f5f6;left:1444.05px;">1 Hours</span>
<span class="t" style="top:921.40px;font-size:20px;color:#f4f5f6;z-index:5;transform:scaleX(0.9500);-webkit-text-stroke:0.2px #f4f5f6;left:1668.55px;">Labor - Rush/After Hours</span>
<span class="t" style="top:921.40px;font-size:20px;color:#f4f5f6;z-index:5;transform:scaleX(0.9500);-webkit-text-stroke:0.2px #f4f5f6;left:2004.50px;">$125.00</span>
<span class="t" style="top:1007.10px;font-size:20px;color:#f4f5f6;z-index:5;transform:scaleX(0.9500);-webkit-text-stroke:0.2px #f4f5f6;left:553.05px;">Non-Billable Repair</span>
<span class="t" style="top:1007.10px;font-size:20px;color:#f4f5f6;z-index:5;transform:scaleX(0.9500);-webkit-text-stroke:0.2px #f4f5f6;left:874.50px;">Ticket</span>
<span class="t" style="top:1007.10px;font-size:20px;color:#f4f5f6;z-index:5;transform:scaleX(0.9604);-webkit-text-stroke:0.2px #f4f5f6;left:1192.04px;">15 Minutes</span>
<span class="t" style="top:1007.10px;font-size:20px;color:#f4f5f6;z-index:5;transform:scaleX(0.9547);-webkit-text-stroke:0.2px #f4f5f6;left:1445.00px;">30 Minutes</span>
<span class="t" style="top:1007.10px;font-size:20px;color:#f4f5f6;z-index:5;transform:scaleX(0.9500);-webkit-text-stroke:0.2px #f4f5f6;left:1668.55px;">Labor</span>
<span class="t" style="top:1007.10px;font-size:20px;color:#f4f5f6;z-index:5;transform:scaleX(0.9500);-webkit-text-stroke:0.2px #f4f5f6;left:2004.50px;">$75.00</span>
<span class="t" style="top:718.10px;font-size:20px;color:#f4f5f6;z-index:31;transform:scaleX(0.9500);-webkit-text-stroke:0.2px #f4f5f6;left:890.60px;">All</span>
<span class="t" style="top:767.00px;font-size:20px;color:#f4f5f6;z-index:31;transform:scaleX(0.9500);-webkit-text-stroke:0.2px #f4f5f6;left:890.60px;">Ticket</span>
<span class="t" style="top:816.20px;font-size:20px;color:#f4f5f6;z-index:31;transform:scaleX(0.9500);-webkit-text-stroke:0.2px #f4f5f6;left:890.60px;">Admin</span>
<span class="t" style="top:1104.30px;font-size:20px;color:#f4f5f6;z-index:5;transform:scaleX(0.8765);font-weight:700;left:2286.00px;">Cancel</span>
<span class="t" style="top:1103.88px;font-size:20.5px;color:#3a3431;z-index:5;transform:scaleX(0.8552);font-weight:700;left:2380.60px;">Save</span>
</body></html>
